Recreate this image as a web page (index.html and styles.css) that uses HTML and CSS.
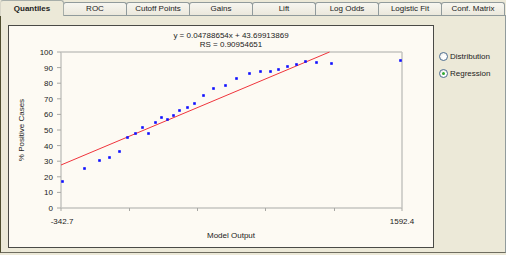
FILE: index.html
```html
<!DOCTYPE html>
<html>
<head>
<meta charset="utf-8">
<link rel="stylesheet" href="styles.css">
</head>
<body>
<div class="window">
  <div class="tabs">
    <div class="tab active">Quantiles</div>
    <div class="tab">ROC</div>
    <div class="tab">Cutoff Points</div>
    <div class="tab">Gains</div>
    <div class="tab">Lift</div>
    <div class="tab">Log Odds</div>
    <div class="tab">Logistic Fit</div>
    <div class="tab">Conf. Matrix</div>
  </div>
  <div class="panel">
    <div class="chart">
      <svg class="plot" width="424" height="221" viewBox="9 26 424 221">
        <text class="mid" x="231" y="38">y = 0.04788654x + 43.69913869</text>
        <text class="mid" x="231" y="47">RS = 0.90954651</text>
        <g class="frame">
          <line x1="61" y1="52" x2="402" y2="52"/>
          <line x1="402" y1="52" x2="402" y2="208"/>
          <line x1="61" y1="52" x2="61" y2="208"/>
          <line x1="61" y1="208" x2="402" y2="208"/>
        </g>
        <g class="ticks">
          <line x1="57" y1="52" x2="61" y2="52"/>
          <line x1="57" y1="67.6" x2="61" y2="67.6"/>
          <line x1="57" y1="83.2" x2="61" y2="83.2"/>
          <line x1="57" y1="98.8" x2="61" y2="98.8"/>
          <line x1="57" y1="114.4" x2="61" y2="114.4"/>
          <line x1="57" y1="130" x2="61" y2="130"/>
          <line x1="57" y1="145.6" x2="61" y2="145.6"/>
          <line x1="57" y1="161.2" x2="61" y2="161.2"/>
          <line x1="57" y1="176.8" x2="61" y2="176.8"/>
          <line x1="57" y1="192.4" x2="61" y2="192.4"/>
          <line x1="57" y1="208" x2="61" y2="208"/>
          <line x1="61" y1="208" x2="61" y2="211"/>
          <line x1="129.5" y1="208" x2="129.5" y2="211"/>
          <line x1="197.5" y1="208" x2="197.5" y2="211"/>
          <line x1="265.5" y1="208" x2="265.5" y2="211"/>
          <line x1="334.5" y1="208" x2="334.5" y2="211"/>
          <line x1="402" y1="208" x2="402" y2="211"/>
        </g>
        <g class="ylab">
          <text x="53" y="55">100</text>
          <text x="53" y="70.6">90</text>
          <text x="53" y="86.2">80</text>
          <text x="53" y="101.8">70</text>
          <text x="53" y="117.4">60</text>
          <text x="53" y="133">50</text>
          <text x="53" y="148.6">40</text>
          <text x="53" y="164.2">30</text>
          <text x="53" y="179.8">20</text>
          <text x="53" y="195.4">10</text>
          <text x="53" y="211">0</text>
        </g>
        <text class="mid" x="62" y="224">-342.7</text>
        <text class="mid" x="402" y="224">1592.4</text>
        <text class="mid" x="231" y="238">Model Output</text>
        <text class="mid" transform="translate(24 130) rotate(-90)">% Positive Cases</text>
        <line class="fit" x1="61" y1="165" x2="329.5" y2="52"/>
        <g class="pts">
          <rect x="61.2" y="180.2" width="2.6" height="2.6"/>
          <rect x="83.2" y="167.2" width="2.6" height="2.6"/>
          <rect x="98.2" y="159.2" width="2.6" height="2.6"/>
          <rect x="108.2" y="156.2" width="2.6" height="2.6"/>
          <rect x="118.2" y="150.2" width="2.6" height="2.6"/>
          <rect x="126.2" y="136.2" width="2.6" height="2.6"/>
          <rect x="134.2" y="132.2" width="2.6" height="2.6"/>
          <rect x="141.2" y="126.2" width="2.6" height="2.6"/>
          <rect x="147.2" y="132.2" width="2.6" height="2.6"/>
          <rect x="154.2" y="121.2" width="2.6" height="2.6"/>
          <rect x="160.2" y="116.2" width="2.6" height="2.6"/>
          <rect x="166.2" y="118.2" width="2.6" height="2.6"/>
          <rect x="172.2" y="114.2" width="2.6" height="2.6"/>
          <rect x="178.2" y="109.2" width="2.6" height="2.6"/>
          <rect x="186.2" y="106.2" width="2.6" height="2.6"/>
          <rect x="193.2" y="102.2" width="2.6" height="2.6"/>
          <rect x="202.2" y="94.2" width="2.6" height="2.6"/>
          <rect x="212.2" y="87.2" width="2.6" height="2.6"/>
          <rect x="224.2" y="84.2" width="2.6" height="2.6"/>
          <rect x="235.2" y="77.2" width="2.6" height="2.6"/>
          <rect x="248.2" y="72.2" width="2.6" height="2.6"/>
          <rect x="259.2" y="70.2" width="2.6" height="2.6"/>
          <rect x="269.2" y="70.2" width="2.6" height="2.6"/>
          <rect x="277.2" y="68.2" width="2.6" height="2.6"/>
          <rect x="286.2" y="65.2" width="2.6" height="2.6"/>
          <rect x="295.2" y="63.2" width="2.6" height="2.6"/>
          <rect x="304.2" y="60.2" width="2.6" height="2.6"/>
          <rect x="315.2" y="61.2" width="2.6" height="2.6"/>
          <rect x="330.2" y="62.2" width="2.6" height="2.6"/>
          <rect x="399.2" y="59.2" width="2.6" height="2.6"/>
        </g>
      </svg>
    </div>
    <div class="options">
      <label class="radio"><span class="circle"></span>Distribution</label>
      <label class="radio"><span class="circle checked"></span>Regression</label>
    </div>
  </div>
</div>
</body>
</html>
```
FILE: styles.css
```css
html, body {
  margin: 0;
  padding: 0;
  background: #ece9d8;
}
body {
  font-family: "Liberation Sans", Arial, sans-serif;
  font-size: 8px;
  color: #1e1e1e;
}
.window {
  width: 506px;
  height: 255px;
  display: flex;
  flex-direction: column;
  background: #ece9d8;
}
.tabs {
  display: flex;
  align-items: flex-end;
  height: 15px;
  position: relative;
  z-index: 2;
}
.tab {
  box-sizing: border-box;
  width: 64px;
  height: 13px;
  margin-right: -1px;
  border: 1px solid #919b9c;
  border-bottom: none;
  border-radius: 3px 3px 0 0;
  background: linear-gradient(#f7f6f0, #ebe8dc);
  text-align: center;
  line-height: 12px;
  color: #222;
}
.tab.active {
  height: 16px;
  margin-bottom: -1px;
  background: #ece9d8;
  font-weight: bold;
  line-height: 15px;
  position: relative;
  z-index: 3;
  border-color: #a7aea9;
  border-left-color: #d8d6c8;
}
.panel {
  box-sizing: border-box;
  height: 238px;
  border: 1px solid #919b9c;
  border-left: 1px solid #4f4d2e;
  border-bottom: 1px solid #6f6d60;
  display: flex;
  align-items: flex-start;
}
.chart {
  margin: 9px 0 0 7px;
  border: 1px solid #4a4a46;
  background: #fdfaf3;
  width: 424px;
  height: 221px;
}
.plot {
  display: block;
}
.plot text {
  font-family: "Liberation Sans", Arial, sans-serif;
  font-size: 8px;
  fill: #222;
}
.plot .mid {
  text-anchor: middle;
}
.plot .ylab text {
  text-anchor: end;
}
.frame line {
  stroke: #c4c4c0;
  stroke-width: 1.5;
}
.ticks line {
  stroke: #a8a8a4;
  stroke-width: 1;
}
.fit {
  stroke: #f0343c;
  stroke-width: 1;
}
.pts rect {
  fill: #1010ff;
}
.options {
  display: flex;
  flex-direction: column;
  padding: 32px 0 0 5px;
}
.radio {
  display: flex;
  align-items: center;
  height: 17px;
  gap: 2px;
  color: #222;
}
.circle {
  box-sizing: border-box;
  width: 9px;
  height: 9px;
  border: 1px solid #4e6f93;
  border-radius: 50%;
  background: radial-gradient(circle at 60% 60%, #ffffff 30%, #e2e1da 100%);
  display: flex;
  align-items: center;
  justify-content: center;
}
.circle.checked::after {
  content: "";
  width: 3px;
  height: 3px;
  border-radius: 50%;
  background: #2fa82f;
}
```
